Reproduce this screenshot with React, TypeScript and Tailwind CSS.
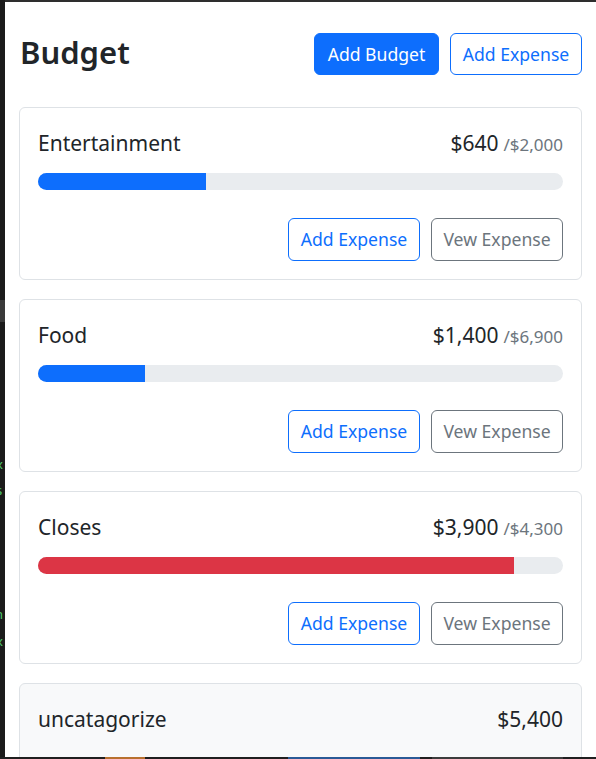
import React from 'react';

type Budget = {
  name: string;
  spent: number;
  max?: number;
  color?: string;
  light?: boolean;
};

const budgets: Budget[] = [
  { name: 'Entertainment', spent: 640, max: 2000, color: 'bg-[#0d6efd]' },
  { name: 'Food', spent: 1400, max: 6900, color: 'bg-[#0d6efd]' },
  { name: 'Closes', spent: 3900, max: 4300, color: 'bg-[#dc3545]' },
  { name: 'uncatagorize', spent: 5400, light: true },
];

const fmt = (n: number) => '$' + n.toLocaleString('en-US');

function BudgetCard({ budget }: { budget: Budget }) {
  const pct = budget.max ? Math.min(100, (budget.spent / budget.max) * 100) : 0;

  return (
    <div
      className={`border border-[#dee2e6] rounded-[6px] px-[18px] pt-[17px] pb-[18px] ${
        budget.light ? 'bg-[#f8f9fa]' : 'bg-white'
      }`}
    >
      <div className="flex h-[36px] items-baseline justify-between overflow-hidden leading-[36px] text-[21px] text-[#212529]">
        <div>{budget.name}</div>
        <div className="flex items-baseline">
          {fmt(budget.spent)}
          {budget.max && (
            <span className="ml-[5px] text-[17px] text-[#6c757d]">/{fmt(budget.max)}</span>
          )}
        </div>
      </div>

      {budget.max ? (
        <div className="mt-[12px] h-[17px] rounded-full bg-[#e9ecef] overflow-hidden">
          <div className={`h-full ${budget.color ?? 'bg-[#0d6efd]'}`} style={{ width: `${pct}%` }} />
        </div>
      ) : (
        <div className="h-[29px]" />
      )}

      <div className="mt-[28px] flex justify-end gap-[11px]">
        <button className="h-[43px] w-[132px] rounded-[6px] border border-[#0d6efd] text-[17.6px] text-[#0d6efd] bg-transparent">
          Add Expense
        </button>
        <button className="h-[43px] w-[132px] rounded-[6px] border border-[#6c757d] text-[17.6px] text-[#6c757d] bg-transparent">
          Vew Expense
        </button>
      </div>
    </div>
  );
}

export default function App() {
  return (
    <div
      className="relative flex h-[759px] overflow-hidden bg-white"
      style={{ fontFamily: '"Noto Sans", "Open Sans", sans-serif' }}
    >
      {/* editor edge on the left */}
      <div className="relative w-[5px] shrink-0 bg-[#1b1b1b] overflow-hidden">
        <div className="absolute left-0 top-[300px] h-[22px] w-full bg-[#3a3a3a]" />
        <span className="absolute left-[-4px] top-[455px] text-[13px] text-[#4ec96b]">x</span>
        <span className="absolute left-[-4px] top-[481px] text-[13px] text-[#4ec96b]">s</span>
        <span className="absolute left-[-5px] top-[605px] text-[13px] text-[#4ec96b]">n</span>
        <span className="absolute left-[-4px] top-[632px] text-[13px] text-[#4ec96b]">x</span>
      </div>

      <div className="flex-1 border-t-[2px] border-[#2e2e2e] px-[14px] pt-[31px]">
        <div className="flex items-start justify-between">
          <h1 className="pl-[1px] text-[31px] font-semibold leading-[38px] text-[#212529]">Budget</h1>
          <div className="flex gap-[11px]">
            <button className="h-[42px] w-[125px] rounded-[6px] border border-[#0d6efd] bg-[#0d6efd] text-[17.6px] text-white">
              Add Budget
            </button>
            <button className="h-[42px] w-[132px] rounded-[6px] border border-[#0d6efd] text-[17.6px] text-[#0d6efd]">
              Add Expense
            </button>
          </div>
        </div>

        <div className="mt-[32px] flex flex-col gap-[19px]">
          {budgets.map((b) => (
            <BudgetCard key={b.name} budget={b} />
          ))}
        </div>
      </div>

      {/* bottom edge of the window */}
      <div className="absolute bottom-0 left-0 h-[2px] w-full bg-[#1f1f1f]">
        <div className="absolute left-[105px] h-full w-[40px] bg-[#b8702e]" />
        <div className="absolute left-[288px] h-full w-[132px] bg-[#2a5a96]" />
        <div className="absolute left-[432px] h-full w-[131px] bg-[#3c3c3c]" />
      </div>
    </div>
  );
}
